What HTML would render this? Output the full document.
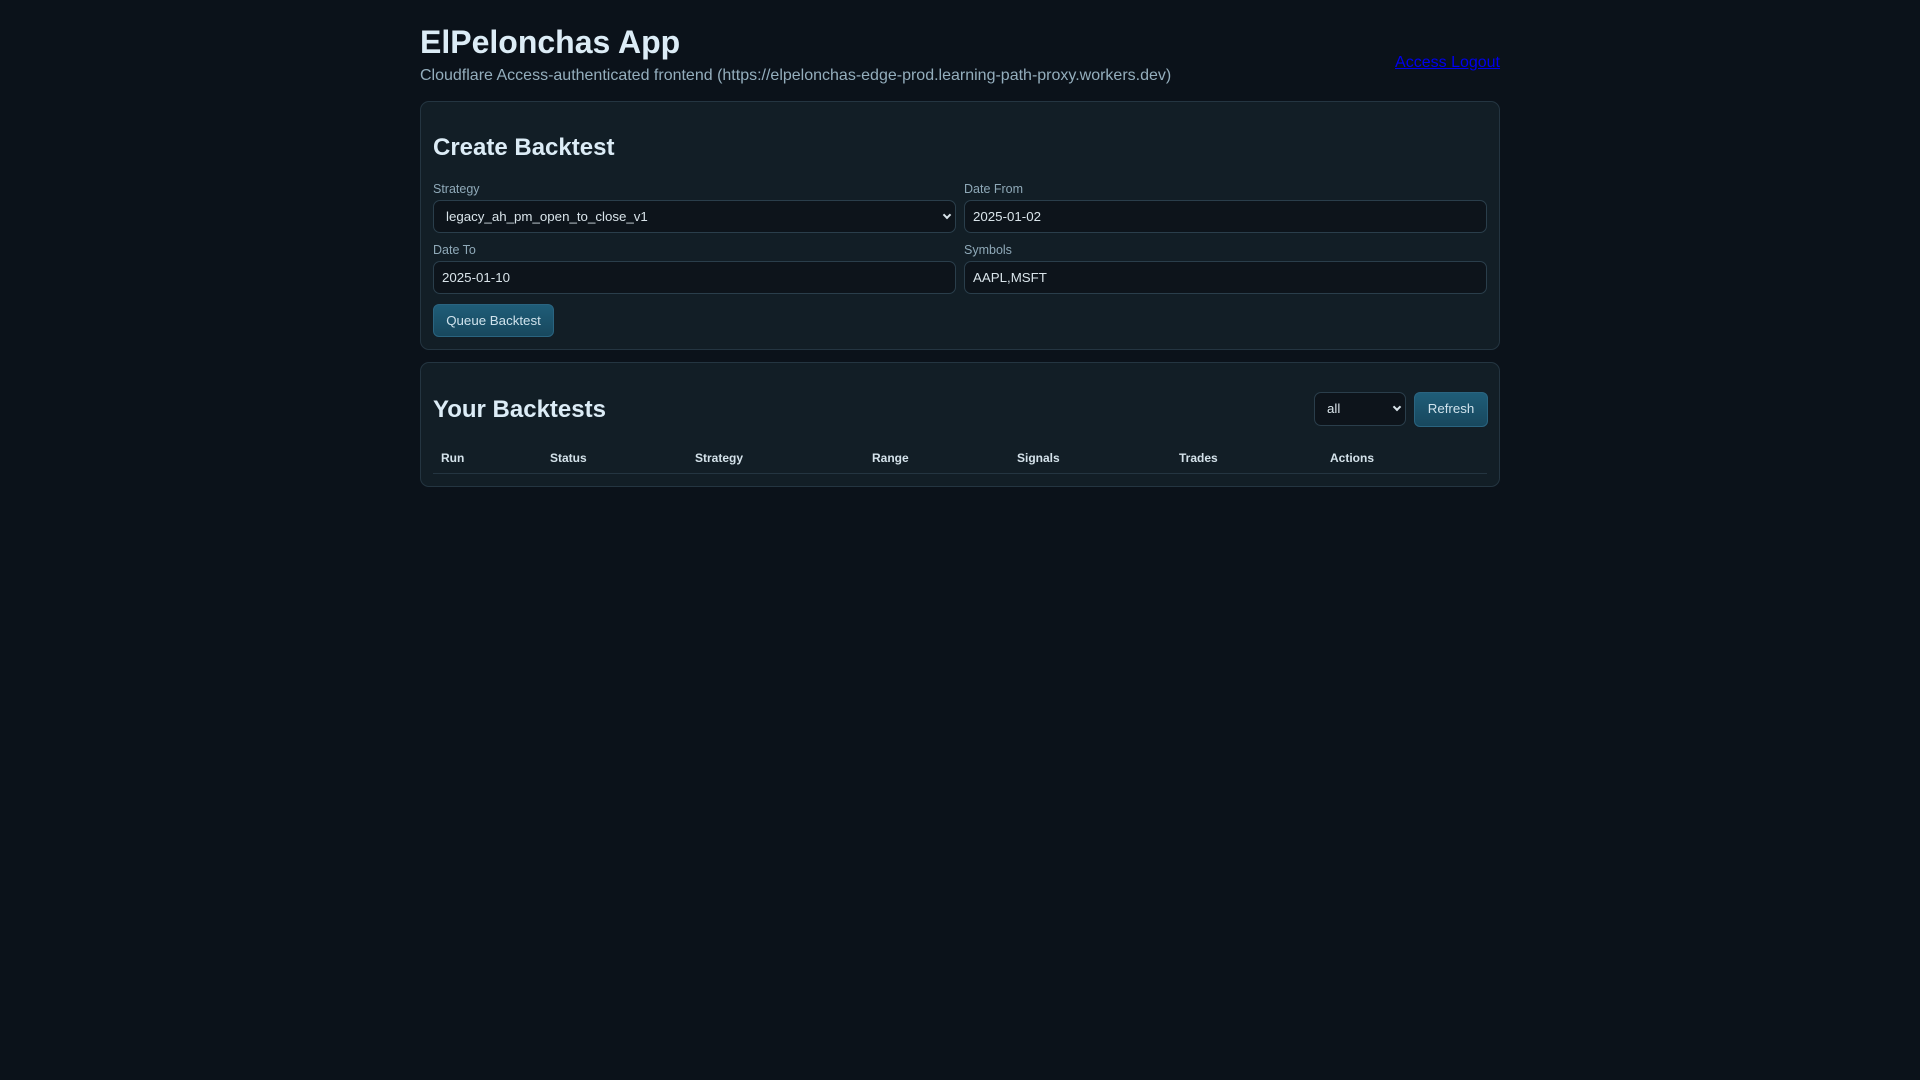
<!DOCTYPE html>
<html><head><meta charset="utf-8"><style>
*{box-sizing:border-box}
body{margin:0;background:#0b121a;font-family:"Liberation Sans",Arial,sans-serif;color:#d6e6f0;width:1920px;height:1080px;overflow:hidden}
.wrap{position:absolute;left:420px;width:1080px;top:0}
h1{position:absolute;left:0;top:22px;margin:0;font-size:32px;font-weight:bold;color:#dcecf6;line-height:40px}
.sub{position:absolute;left:0;top:65px;font-size:16px;color:#94aebd;white-space:nowrap;line-height:22px}
.logout{position:absolute;right:0;top:54px;font-size:16px;color:#0000ee;text-decoration:underline}
.panel{position:absolute;left:0;width:1080px;background:#121e26;border:1px solid #243541;border-radius:9px}
h2{position:absolute;left:12px;margin:0;font-size:24px;font-weight:bold;color:#dcecf6;line-height:30px}
.lbl{position:absolute;font-size:12.5px;color:#8fa9b8}
.inp{position:absolute;height:33px;background:#0d141b;border:1px solid #2a3e4b;border-radius:7px;font-size:13.3px;color:#d9e4ea;padding-left:8px;line-height:31px;width:523px}
.sel{padding-left:12px}
.chev{position:absolute;right:5px;top:11px;border-right:2px solid #d9e4ea;border-bottom:2px solid #d9e4ea;transform:rotate(45deg);width:6px;height:6px}
.btn{position:absolute;height:33px;border-radius:6px;background:linear-gradient(#1f5d78,#18485e);border:1px solid #2a6480;color:#cfe2ec;font-size:13.3px;line-height:31px;text-align:center}
.th{position:absolute;top:88px;font-size:12px;font-weight:bold;color:#d4e2ea}
</style></head><body>
<div class="wrap">
<h1>ElPelonchas App</h1>
<div class="sub">Cloudflare Access-authenticated frontend (https://elpelonchas-edge-prod.learning-path-proxy.workers.dev)</div>
<a class="logout">Access Logout</a>
<div class="panel" style="top:101px;height:249px">
 <h2 style="top:31px">Create Backtest</h2>
 <div class="lbl" style="left:12px;top:80px">Strategy</div>
 <div class="inp sel" style="left:12px;top:98px">legacy_ah_pm_open_to_close_v1<span class="chev"></span></div>
 <div class="lbl" style="left:543px;top:80px">Date From</div>
 <div class="inp" style="left:543px;top:98px">2025-01-02</div>
 <div class="lbl" style="left:12px;top:141px">Date To</div>
 <div class="inp" style="left:12px;top:159px">2025-01-10</div>
 <div class="lbl" style="left:543px;top:141px">Symbols</div>
 <div class="inp" style="left:543px;top:159px">AAPL,MSFT</div>
 <div class="btn" style="left:12px;top:202px;width:121px">Queue Backtest</div>
</div>
<div class="panel" style="top:362px;height:125px">
 <h2 style="top:32px">Your Backtests</h2>
 <div class="inp sel" style="left:893px;top:29px;width:92px;height:34px">all<span class="chev"></span></div>
 <div class="btn" style="left:993px;top:29px;width:74px;height:35px">Refresh</div>
 <div class="th" style="left:20px">Run</div>
 <div class="th" style="left:129px">Status</div>
 <div class="th" style="left:274px">Strategy</div>
 <div class="th" style="left:451px">Range</div>
 <div class="th" style="left:596px">Signals</div>
 <div class="th" style="left:758px">Trades</div>
 <div class="th" style="left:909px">Actions</div>
 <div style="position:absolute;left:12px;right:12px;top:110px;height:1px;background:#243541"></div>
</div>
</div>
</body></html>
